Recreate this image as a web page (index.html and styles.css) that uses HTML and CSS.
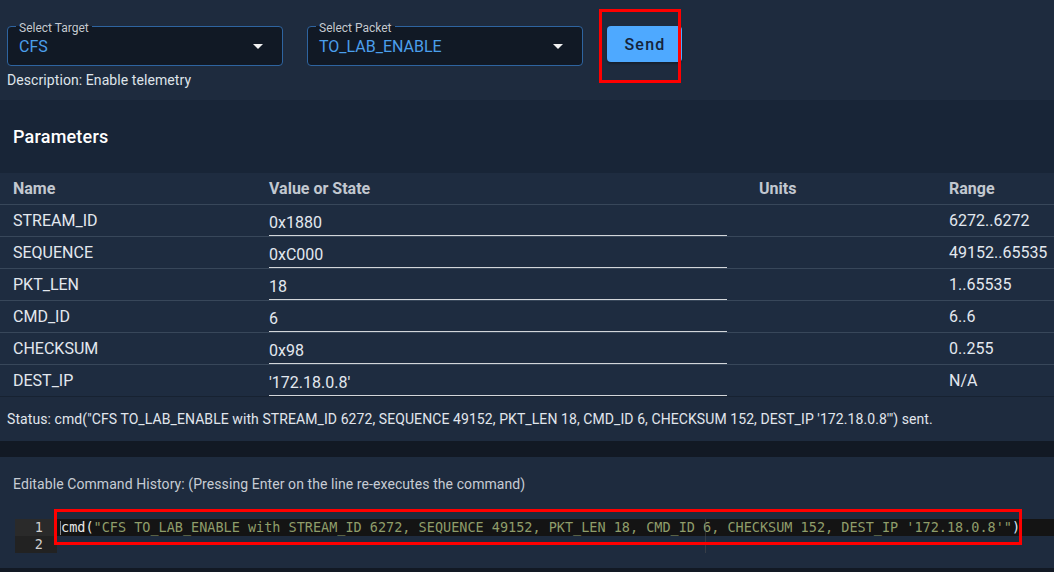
FILE: index.html
```html
<!DOCTYPE html>
<html>
<head>
<meta charset="utf-8">
<link rel="stylesheet" href="styles.css">
</head>
<body>
<section class="top">
  <div class="controls">
    <div class="field">
      <span class="field-label">Select Target</span>
      <span class="field-value">CFS</span>
      <span class="caret"></span>
    </div>
    <div class="field">
      <span class="field-label">Select Packet</span>
      <span class="field-value">TO_LAB_ENABLE</span>
      <span class="caret"></span>
    </div>
    <div class="send-wrap">
      <button class="send">Send</button>
      <span class="mark mark-send"></span>
    </div>
  </div>
  <div class="description">Description: Enable telemetry</div>
</section>

<section class="params">
  <h2 class="params-title">Parameters</h2>
  <div class="table">
    <div class="row head">
      <div class="cell">Name</div>
      <div class="cell">Value or State</div>
      <div class="cell">Units</div>
      <div class="cell">Range</div>
    </div>
    <div class="row body">
      <div class="cell name">STREAM_ID</div>
      <div class="cell value"><div class="input">0x1880</div></div>
      <div class="cell"></div>
      <div class="cell">6272..6272</div>
    </div>
    <div class="row body">
      <div class="cell name">SEQUENCE</div>
      <div class="cell value"><div class="input">0xC000</div></div>
      <div class="cell"></div>
      <div class="cell">49152..65535</div>
    </div>
    <div class="row body">
      <div class="cell name">PKT_LEN</div>
      <div class="cell value"><div class="input">18</div></div>
      <div class="cell"></div>
      <div class="cell">1..65535</div>
    </div>
    <div class="row body">
      <div class="cell name">CMD_ID</div>
      <div class="cell value"><div class="input">6</div></div>
      <div class="cell"></div>
      <div class="cell">6..6</div>
    </div>
    <div class="row body">
      <div class="cell name">CHECKSUM</div>
      <div class="cell value"><div class="input">0x98</div></div>
      <div class="cell"></div>
      <div class="cell">0..255</div>
    </div>
    <div class="row body last">
      <div class="cell name">DEST_IP</div>
      <div class="cell value"><div class="input">'172.18.0.8'</div></div>
      <div class="cell"></div>
      <div class="cell">N/A</div>
    </div>
  </div>
  <div class="status">Status: cmd("CFS TO_LAB_ENABLE with STREAM_ID 6272, SEQUENCE 49152, PKT_LEN 18, CMD_ID 6, CHECKSUM 152, DEST_IP '172.18.0.8'") sent.</div>
</section>

<section class="history">
  <div class="history-label">Editable Command History: (Pressing Enter on the line re-executes the command)</div>
  <div class="editor">
    <div class="gutter">
      <div class="ln active">1</div>
      <div class="ln">2</div>
    </div>
    <div class="code">
      <div class="line active"><span class="cursor"></span><span class="fn">cmd(</span><span class="str">"CFS TO_LAB_ENABLE with STREAM_ID 6272, SEQUENCE 49152, PKT_LEN 18, CMD_ID 6, CHECKSUM 152, DEST_IP '172.18.0.8'"</span><span class="paren">)</span></div>
      <div class="line"></div>
      <span class="print-margin"></span>
    </div>
    <span class="mark mark-code"></span>
  </div>
</section>
</body>
</html>
```

FILE: styles.css
```css
* { box-sizing: border-box; }

html, body {
  margin: 0;
  padding: 0;
}

body {
  background: #121924;
  font-family: Roboto, "Liberation Sans", sans-serif;
  font-size: 14px;
  letter-spacing: 0.08px;
  color: #e1e6ed;
  width: 1054px;
  height: 572px;
  overflow: hidden;
}

/* ---------- top ---------- */
.top {
  background: #1e2b3e;
  height: 100px;
  padding: 26px 7px 0;
}

.controls {
  display: flex;
  align-items: flex-start;
  gap: 24px;
}

.field {
  position: relative;
  width: 276px;
  height: 40px;
  border: 1px solid #2e64a0;
  border-radius: 4px;
  background: #111925;
  display: flex;
  align-items: center;
  padding: 2px 19px 0 11px;
}

.field-label {
  position: absolute;
  top: -6px;
  left: 8px;
  padding: 0 3px;
  font-size: 12px;
  line-height: 14px;
  letter-spacing: 0;
  color: #c3c9d1;
  background: linear-gradient(to bottom, #1e2b3e 0, #1e2b3e 5px, #111925 5px);
}

.field-value {
  flex: 1;
  font-size: 16px;
  color: #4b9fec;
  line-height: 20px;
  letter-spacing: 0;
}

.caret {
  width: 0;
  height: 0;
  margin-top: -2px;
  border-left: 5px solid transparent;
  border-right: 5px solid transparent;
  border-top: 5px solid #f2f2f2;
}

.send-wrap {
  position: relative;
}

.send {
  display: block;
  width: 75px;
  height: 36px;
  border: none;
  border-radius: 4px;
  background: #4ea9ff;
  color: #15233a;
  font-family: Roboto, "Liberation Sans", sans-serif;
  font-size: 16px;
  font-weight: 500;
  letter-spacing: 1.25px;
  padding: 0 0 0 1px;
  box-shadow: 0 2px 2px rgba(0,0,0,0.25);
}

.mark {
  position: absolute;
  border: 3px solid #ff0000;
  pointer-events: none;
}

.mark-send {
  left: -8px;
  top: -17px;
  width: 82px;
  height: 74px;
}

.description {
  margin-top: 6px;
  line-height: 16px;
  color: #dfe4ea;
}

/* ---------- parameters ---------- */
.params {
  background: #1e2b3e;
}

.params-title {
  margin: 0;
  height: 73px;
  line-height: 74px;
  padding-left: 13px;
  font-size: 18px;
  font-weight: 500;
  letter-spacing: 0.2px;
  color: #ffffff;
  background: #182537;
}

.table {
  background: #1e2c40;
  font-size: 16px;
  letter-spacing: 0;
}

.row {
  display: grid;
  grid-template-columns: 256px 490px 190px 1fr;
  height: 32px;
  border-bottom: 1px solid #38475a;
}

.row.last {
  border-bottom-color: #172231;
}

.cell {
  padding-left: 13px;
  display: flex;
  align-items: center;
  color: #e3e8ef;
  white-space: nowrap;
}

.row.head .cell {
  font-weight: 700;
  color: #c2c8d0;
}

.cell.value {
  padding-right: 19px;
  align-items: stretch;
}

.input {
  flex: 1;
  display: flex;
  align-items: flex-end;
  padding-bottom: 3px;
  border-bottom: 1px solid #d3d6da;
  color: #e3e8ef;
  line-height: 18px;
}

.status {
  height: 44px;
  line-height: 44px;
  padding-left: 7px;
  color: #e1e6ed;
  background: #1e2b3e;
}

/* ---------- history ---------- */
.history {
  margin-top: 16px;
  background: #1e2b3e;
  height: 111px;
  padding: 19px 0 0 0;
}

.history-label {
  padding-left: 13px;
  line-height: 16px;
  color: #c7ccd4;
}

.editor {
  position: relative;
  margin: 27px 0 0 15px;
  display: grid;
  grid-template-columns: 42px 1fr;
  font-family: "DejaVu Sans Mono", "Liberation Mono", monospace;
  font-size: 13.5px;
  line-height: 17px;
  letter-spacing: 0;
}

.gutter {
  background: #222222;
}

.ln {
  height: 17px;
  text-align: right;
  padding-right: 14px;
  color: #cfcfcf;
}

.ln.active {
  background: #2a2a2a;
}

.code {
  position: relative;
}

.line {
  height: 17px;
  padding-left: 4px;
  white-space: pre;
  position: relative;
}

.line.active {
  background: #141414;
}

.cursor {
  position: absolute;
  left: 3px;
  top: 2px;
  width: 1px;
  height: 14px;
  background: #8a8a8a;
}

.fn { color: #e8e8e8; }
.str { color: #8f9d6a; }
.paren { color: #dbe6f5; }

.print-margin {
  position: absolute;
  left: 648px;
  top: 0;
  width: 1px;
  height: 34px;
  background: rgba(80, 80, 80, 0.5);
}

.mark-code {
  left: 39px;
  top: -10px;
  width: 968px;
  height: 36px;
}
```
